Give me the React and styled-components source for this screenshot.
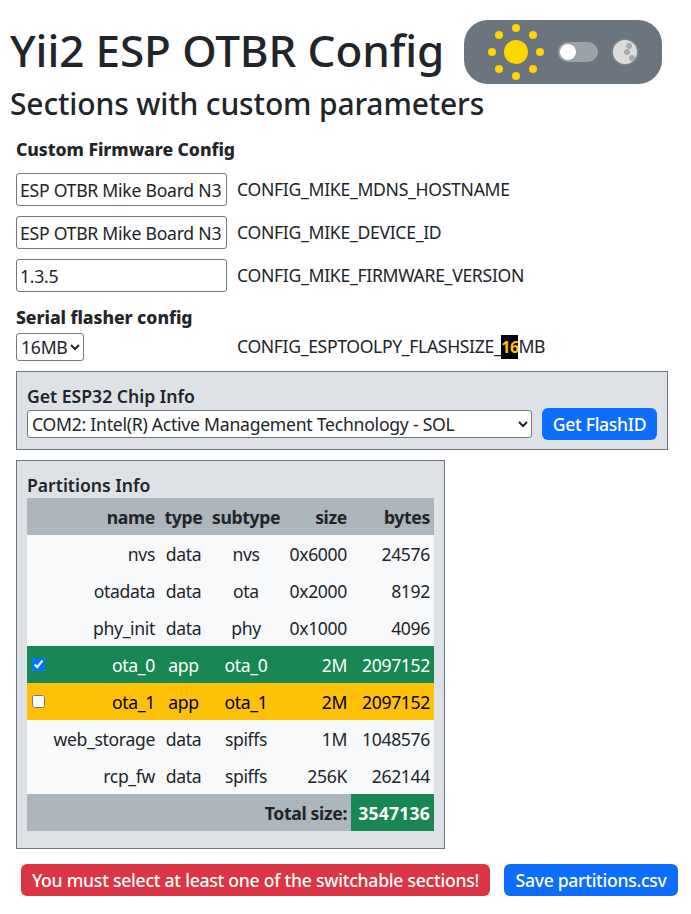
import React from 'react'
import styled, { createGlobalStyle } from 'styled-components'

const FONT = '"Noto Sans", "Open Sans", "Liberation Sans", sans-serif'

const partitions = [
    { name: 'nvs', type: 'data', subtype: 'nvs', size: '0x6000', bytes: 24576 },
    { name: 'otadata', type: 'data', subtype: 'ota', size: '0x2000', bytes: 8192 },
    { name: 'phy_init', type: 'data', subtype: 'phy', size: '0x1000', bytes: 4096 },
    { name: 'ota_0', type: 'app', subtype: 'ota_0', size: '2M', bytes: 2097152, tone: 'success', checked: true },
    { name: 'ota_1', type: 'app', subtype: 'ota_1', size: '2M', bytes: 2097152, tone: 'warning', checked: false },
    { name: 'web_storage', type: 'data', subtype: 'spiffs', size: '1M', bytes: 1048576 },
    { name: 'rcp_fw', type: 'data', subtype: 'spiffs', size: '256K', bytes: 262144 },
]

const customFields = [
    { value: 'ESP OTBR Mike Board N3', param: 'CONFIG_MIKE_MDNS_HOSTNAME' },
    { value: 'ESP OTBR Mike Board N3', param: 'CONFIG_MIKE_DEVICE_ID' },
    { value: '1.3.5', param: 'CONFIG_MIKE_FIRMWARE_VERSION' },
]

const Sun = () => {
    const dots = [[0, -24], [17, -17], [24, 0], [17, 17], [0, 24], [-17, 17], [-24, 0], [-17, -17]]
    return (
        <svg width="60" height="60" viewBox="-30 -30 60 60">
            <circle r="12" fill="#ffd600" />
            {dots.map(([x, y]) => <circle key={x + '_' + y} cx={x} cy={y} r="4" fill="#ffd600" />)}
        </svg>
    )
}

const Moon = () => (
    <svg width="32" height="32" viewBox="-16 -16 32 32">
        <defs>
            <radialGradient id="moonGlow">
                <stop offset="70%" stopColor="#c8cccf" stopOpacity="0.6" />
                <stop offset="100%" stopColor="#6c757d" stopOpacity="0" />
            </radialGradient>
        </defs>
        <circle r="15" fill="url(#moonGlow)" />
        <circle r="12" fill="#dcdcdc" />
        <circle cx="4" cy="-6" r="3" fill="#a9a9a9" />
        <circle cx="2" cy="0" r="3" fill="#a9a9a9" />
        <circle cx="7" cy="6" r="3" fill="#a9a9a9" />
    </svg>
)

export default function App() {
    return (
        <Page>
            <GlobalStyle />
            <Header>
                <Title>Yii2 ESP OTBR Config</Title>
                <ThemeToggle>
                    <Sun />
                    <SwitchTrack />
                    <Moon />
                </ThemeToggle>
            </Header>
            <Subtitle>Sections with custom parameters</Subtitle>
            <Content>
                <SectionTitle>Custom Firmware Config</SectionTitle>
                {customFields.map((f) => (
                    <FieldRow key={f.param}>
                        <TextInput defaultValue={f.value} />
                        <ParamName>{f.param}</ParamName>
                    </FieldRow>
                ))}
                <SectionTitle $second>Serial flasher config</SectionTitle>
                <FlashRow>
                    <SizeSelect defaultValue="16MB">
                        <option>4MB</option>
                        <option>8MB</option>
                        <option>16MB</option>
                    </SizeSelect>
                    <FlashParam>CONFIG_ESPTOOLPY_FLASHSIZE_<Mark>16</Mark>MB</FlashParam>
                </FlashRow>
                <ChipPanel>
                    <PanelTitle>Get ESP32 Chip Info</PanelTitle>
                    <ChipRow>
                        <PortSelect>
                            <option>COM2: Intel(R) Active Management Technology - SOL</option>
                        </PortSelect>
                        <Button $wide>Get FlashID</Button>
                    </ChipRow>
                </ChipPanel>
                <PartitionPanel>
                    <PanelTitle>Partitions Info</PanelTitle>
                    <Table>
                        <colgroup>
                            <col width="132" />
                            <col width="49" />
                            <col width="76" />
                            <col width="67" />
                            <col width="83" />
                        </colgroup>
                        <thead>
                            <tr>
                                <Th>name</Th>
                                <Th $center>type</Th>
                                <Th $center>subtype</Th>
                                <Th>size</Th>
                                <Th>bytes</Th>
                            </tr>
                        </thead>
                        <tbody>
                            {partitions.map((p) => (
                                <Row key={p.name} $tone={p.tone}>
                                    <NameCell>
                                        {p.tone && <RowCheck type="checkbox" defaultChecked={p.checked} />}
                                        {p.name}
                                    </NameCell>
                                    <Td $center>{p.type}</Td>
                                    <Td $center>{p.subtype}</Td>
                                    <Td>{p.size}</Td>
                                    <Td>{p.bytes}</Td>
                                </Row>
                            ))}
                        </tbody>
                        <tfoot>
                            <tr>
                                <Th colSpan="4">Total size:</Th>
                                <TotalCell>3547136</TotalCell>
                            </tr>
                        </tfoot>
                    </Table>
                </PartitionPanel>
            </Content>
            <Actions>
                <Button $danger>You must select at least one of the switchable sections!</Button>
                <Button>Save partitions.csv</Button>
            </Actions>
        </Page>
    )
}

const GlobalStyle = createGlobalStyle`
    html, body {
        margin: 0;
        padding: 0;
        background: #fff;
        color: #212529;
        font-family: ${FONT};
        font-size: 17.6px;
    }
    * {
        box-sizing: border-box;
    }
`

const Page = styled.div`
    width: 691px;
    height: 914px;
    padding: 20px 0 0 10px;
    overflow: hidden;
`

const Header = styled.div`
    display: flex;
    align-items: flex-start;
    height: 64px;
`

const Title = styled.h1`
    margin: 0;
    width: 454px;
    font-size: 44px;
    font-weight: 500;
    line-height: 60px;
    letter-spacing: -0.1px;
    white-space: nowrap;
`

const ThemeToggle = styled.div`
    width: 198px;
    height: 64px;
    padding-left: 22px;
    display: flex;
    align-items: center;
    background: #6c757d;
    border-radius: 24px;
`

const SwitchTrack = styled.div`
    position: relative;
    width: 40px;
    height: 20px;
    margin: 0 11px 0 12px;
    background: #9aa1a7;
    border-radius: 10px;
    &::before {
        content: '';
        position: absolute;
        left: 2px;
        top: 2px;
        width: 16px;
        height: 16px;
        background: #fff;
        border-radius: 50%;
    }
`

const Subtitle = styled.h2`
    margin: 0;
    font-size: 30px;
    font-weight: 500;
    line-height: 40px;
    letter-spacing: -0.15px;
`

const Content = styled.div`
    padding-left: 6px;
`

const SectionTitle = styled.div`
    font-size: 17.6px;
    font-weight: 800;
    line-height: 24px;
    margin-top: ${(p) => (p.$second ? '13px' : '13px')};
    margin-bottom: ${(p) => (p.$second ? '4px' : '12px')};
    letter-spacing: -0.05px;
`

const FieldRow = styled.div`
    display: grid;
    grid-template-columns: 211px 1fr;
    column-gap: 10px;
    align-items: center;
    height: 33px;
    margin-bottom: 10px;
`

const FlashRow = styled(FieldRow)`
    height: 28px;
    margin-bottom: 10px;
`

const TextInput = styled.input`
    width: 211px;
    height: 33px;
    padding: 0 3px;
    border: 1px solid #767676;
    border-radius: 3px;
    color: #212529;
    background: #fff;
    font-family: ${FONT};
    font-size: 17.6px;
    letter-spacing: -0.25px;
`

const ParamName = styled.span`
    font-size: 17.6px;
    line-height: 24px;
    letter-spacing: -0.3px;
    white-space: nowrap;
    transform: translateY(-1px);
`

const FlashParam = styled(ParamName)`
    letter-spacing: -0.35px;
`

const Mark = styled.span`
    display: inline-block;
    background: #000;
    color: #ffc107;
    font-size: 16px;
    font-weight: 700;
    letter-spacing: -0.6px;
`

const SizeSelect = styled.select`
    width: 68px;
    height: 28px;
    padding: 0;
    border: 1px solid #767676;
    border-radius: 3px;
    color: #212529;
    background: #fff;
    font-family: ${FONT};
    font-size: 17.6px;
    letter-spacing: -0.25px;
`

const Panel = styled.div`
    background: #dee2e6;
    border: 1px solid #6c757d;
`

const ChipPanel = styled(Panel)`
    width: 652px;
    height: 79px;
    padding: 12px 10px 0;
    margin-bottom: 10px;
`

const PartitionPanel = styled(Panel)`
    width: 429px;
    height: 389px;
    padding: 12px 10px 0;
`

const PanelTitle = styled.div`
    font-size: 17.6px;
    font-weight: 600;
    line-height: 24px;
`

const ChipRow = styled.div`
    display: flex;
    align-items: center;
    gap: 10px;
`

const PortSelect = styled(SizeSelect)`
    width: 505px;
`

const Button = styled.button`
    height: 32px;
    padding: 0 10px;
    border: 0;
    border-radius: 6px;
    color: #fff;
    background: ${(p) => (p.$danger ? '#dc3545' : '#0d6efd')};
    font-family: ${FONT};
    font-size: 17.6px;
    font-weight: 500;
    letter-spacing: ${(p) => (p.$danger ? '-0.26px' : '-0.3px')};
    white-space: nowrap;
    width: ${(p) => (p.$danger ? '469px' : p.$wide ? '115px' : '174px')};
`

const Table = styled.table`
    width: 407px;
    table-layout: fixed;
    border-collapse: collapse;
    margin-top: 1px;
`

const Th = styled.th`
    height: 37px;
    padding: 0 4px;
    background: #adb5bd;
    font-weight: 700;
    letter-spacing: -0.35px;
    text-align: ${(p) => (p.$center ? 'center' : 'right')};
    white-space: nowrap;
`

const Row = styled.tr`
    background: ${(p) => (p.$tone === 'success' ? '#198754' : p.$tone === 'warning' ? '#ffc107' : '#f8f9fa')};
    color: ${(p) => (p.$tone === 'success' ? '#fff' : p.$tone === 'warning' ? '#000' : '#212529')};
`

const Td = styled.td`
    height: 37px;
    padding: 0 4px;
    letter-spacing: -0.35px;
    text-align: ${(p) => (p.$center ? 'center' : 'right')};
    white-space: nowrap;
`

const NameCell = styled(Td)`
    position: relative;
`

const RowCheck = styled.input`
    position: absolute;
    left: 5px;
    top: 12px;
    width: 13px;
    height: 13px;
    margin: 0;
`

const TotalCell = styled.th`
    padding: 0 4px;
    background: #198754;
    color: #fff;
    font-weight: 700;
    text-align: right;
    letter-spacing: 0.2px;
`

const Actions = styled.div`
    display: flex;
    gap: 14px;
    margin-top: 15px;
    padding-left: 11px;
`
